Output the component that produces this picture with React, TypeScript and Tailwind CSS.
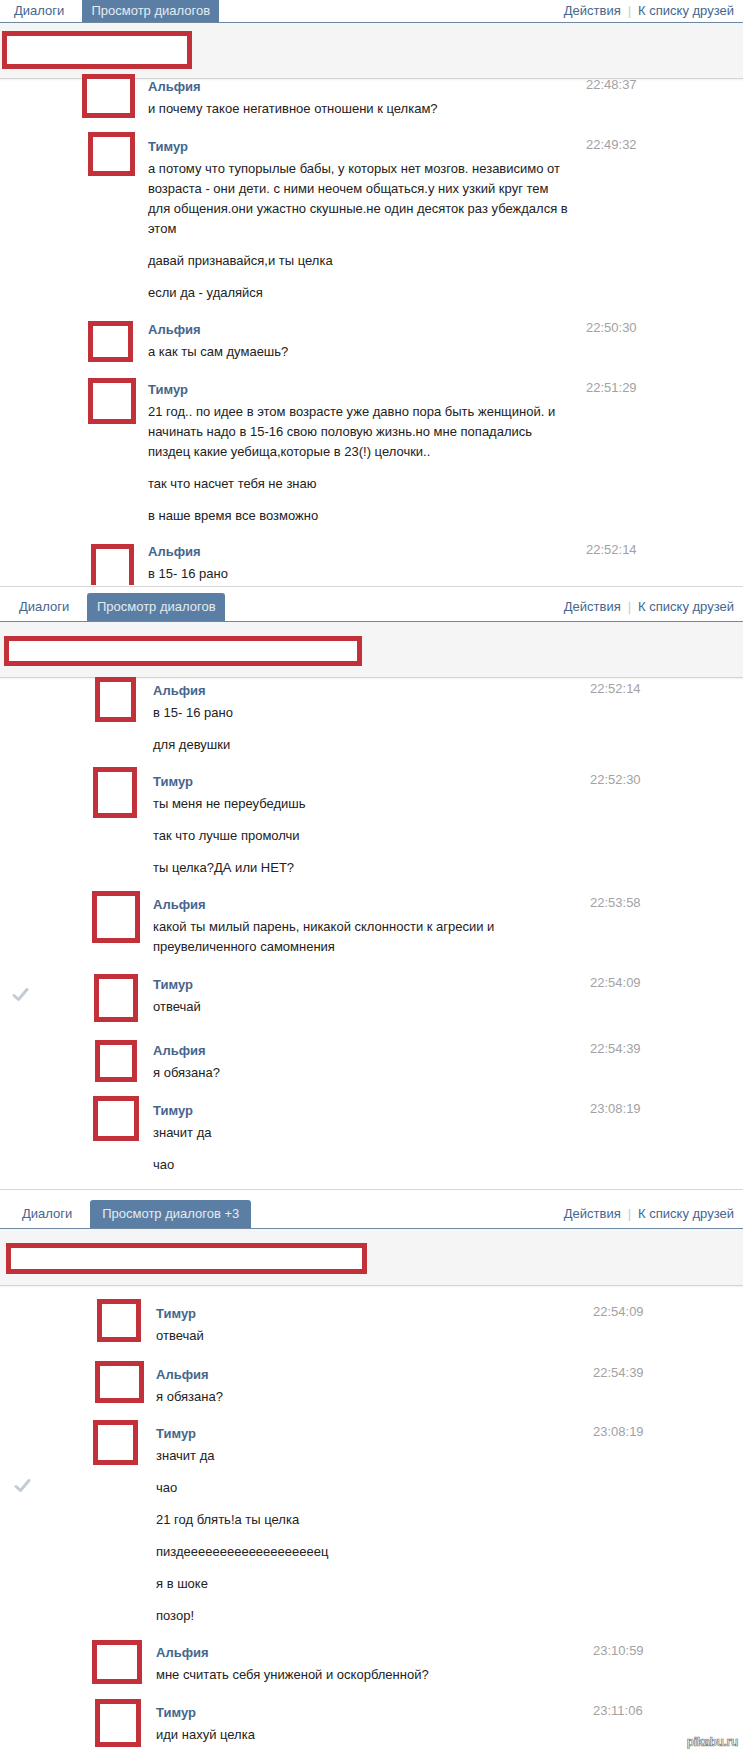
import React from "react";

type Msg = {
  name: string;
  time: string;
  paras: string[][];
  wrap: string;
  av: string;
  check?: string;
};

const P19 = "пизд" + "е".repeat(19) + "ц";

const sec1: Msg[] = [
  {
    name: "Альфия",
    time: "22:48:37",
    paras: [["и почему такое негативное отношени к целкам?"]],
    wrap: "-mt-[6px]",
    av: "ml-[82px] mt-[1px] w-[53px] h-[44px]",
  },
  {
    name: "Тимур",
    time: "22:49:32",
    paras: [
      [
        "а потому что тупорылые бабы, у которых нет мозгов. независимо от",
        "возраста - они дети. с ними неочем общаться.у них узкий круг тем",
        "для общения.они ужастно скушные.не один десяток раз убеждался в",
        "этом",
      ],
      ["давай признавайся,и ты целка"],
      ["если да - удаляйся"],
    ],
    wrap: "mt-[14px]",
    av: "ml-[88px] -mt-[1px] w-[47px] h-[44px]",
  },
  {
    name: "Альфия",
    time: "22:50:30",
    paras: [["а как ты сам думаешь?"]],
    wrap: "mt-[13px]",
    av: "ml-[88px] mt-[5px] w-[45px] h-[41px]",
  },
  {
    name: "Тимур",
    time: "22:51:29",
    paras: [
      [
        "21 год.. по идее в этом возрасте уже давно пора быть женщиной. и",
        "начинать надо в 15-16 свою половую жизнь.но мне попадались",
        "пиздец какие уебища,которые в 23(!) целочки..",
      ],
      ["так что насчет тебя не знаю"],
      ["в наше время все возможно"],
    ],
    wrap: "mt-[14px]",
    av: "ml-[88px] mt-[2px] w-[48px] h-[46px]",
  },
  {
    name: "Альфия",
    time: "22:52:14",
    paras: [["в 15- 16 рано"]],
    wrap: "mt-[12px]",
    av: "ml-[91px] mt-[6px] w-[43px] h-[41px] border-b-0",
  },
];

const sec2: Msg[] = [
  {
    name: "Альфия",
    time: "22:52:14",
    paras: [["в 15- 16 рано"], ["для девушки"]],
    wrap: "-mt-[1px]",
    av: "ml-[95px] mt-0 w-[41px] h-[45px]",
  },
  {
    name: "Тимур",
    time: "22:52:30",
    paras: [["ты меня не переубедишь"], ["так что лучше промолчи"], ["ты целка?ДА или НЕТ?"]],
    wrap: "mt-[13px]",
    av: "ml-[93px] -mt-[1px] w-[44px] h-[51px]",
  },
  {
    name: "Альфия",
    time: "22:53:58",
    paras: [["какой ты милый парень, никакой склонности к агресии и", "преувеличенного самомнения"]],
    wrap: "mt-[13px]",
    av: "ml-[92px] mt-0 w-[48px] h-[52px]",
  },
  {
    name: "Тимур",
    time: "22:54:09",
    paras: [["отвечай"]],
    wrap: "mt-[14px]",
    av: "ml-[94px] mt-[3px] w-[44px] h-[48px]",
    check: "top-[16px] left-[12px]",
  },
  {
    name: "Альфия",
    time: "22:54:39",
    paras: [["я обязана?"]],
    wrap: "mt-[15px]",
    av: "ml-[95px] mt-[3px] w-[42px] h-[42px]",
  },
  {
    name: "Тимур",
    time: "23:08:19",
    paras: [["значит да"], ["чао"]],
    wrap: "mt-[14px]",
    av: "ml-[93px] -mt-[1px] w-[46px] h-[45px]",
  },
];

const sec3: Msg[] = [
  {
    name: "Тимур",
    time: "22:54:09",
    paras: [["отвечай"]],
    wrap: "mt-[14px]",
    av: "ml-[97px] -mt-[1px] w-[44px] h-[43px]",
  },
  {
    name: "Альфия",
    time: "22:54:39",
    paras: [["я обязана?"]],
    wrap: "mt-[15px]",
    av: "ml-[95px] mt-0 w-[49px] h-[42px]",
  },
  {
    name: "Тимур",
    time: "23:08:19",
    paras: [["значит да"], ["чао"], ["21 год блять!а ты целка"], [P19], ["я в шоке"], ["позор!"]],
    wrap: "mt-[13px]",
    av: "ml-[93px] mt-0 w-[45px] h-[45px]",
    check: "top-[58px] left-[14px]",
  },
  {
    name: "Альфия",
    time: "23:10:59",
    paras: [["мне считать себя униженой и оскорбленной?"]],
    wrap: "mt-[13px]",
    av: "ml-[92px] mt-[1px] w-[50px] h-[44px]",
  },
  {
    name: "Тимур",
    time: "23:11:06",
    paras: [["иди нахуй целка"]],
    wrap: "mt-[14px]",
    av: "ml-[95px] mt-0 w-[46px] h-[48px]",
  },
];

function Check() {
  return (
    <svg width="17" height="15" viewBox="0 0 17 15" fill="none">
      <path d="M2 8.5 L6.5 12.5 L15 2.5" stroke="#c3ccd6" strokeWidth="3" strokeLinecap="round" strokeLinejoin="round" />
    </svg>
  );
}

function Message({ m, col, content }: { m: Msg; col: string; content: string }) {
  return (
    <div className={`flex items-start ${m.wrap}`}>
      <div className={`relative flex shrink-0 items-start ${col}`}>
        {m.check && (
          <div className={`absolute ${m.check}`}>
            <Check />
          </div>
        )}
        <div className={`shrink-0 border-[5px] border-[#c2303a] bg-white ${m.av}`} />
      </div>
      <div className={`shrink-0 ${content}`}>
        <div className="mt-[4px] h-[20px] whitespace-nowrap text-[13px] font-bold leading-[20px] text-[#45668e]">
          {m.name}
        </div>
        <div className="mt-[2px] text-[13px] leading-[20px] text-[#222]">
          {m.paras.map((p, i) => (
            <div key={i} className={i > 0 ? "mt-[12px]" : ""}>
              {p.map((l, j) => (
                <div key={j} className="whitespace-nowrap">
                  {l}
                </div>
              ))}
            </div>
          ))}
        </div>
      </div>
      <div className="mt-[2px] whitespace-nowrap text-[13px] leading-[20px] text-[#a2a2a2]">{m.time}</div>
    </div>
  );
}

function RightLinks() {
  return (
    <div className="ml-auto flex items-center pr-[9px] text-[13px] text-[#45668e]">
      <span>Действия</span>
      <span className="mx-[7px] text-[#c8c8c8]">|</span>
      <span>К списку друзей</span>
    </div>
  );
}

export default function App() {
  const font = "font-['Liberation_Sans',Arial,sans-serif]";
  return (
    <div className={`w-[743px] bg-white ${font}`}>
      {/* Section 1 */}
      <div className="border-b border-[#d6d6d6]">
        <div className="flex h-[23px] items-stretch border-b border-[#7089a3] pl-[14px]">
          <div className="flex items-center text-[13px] text-[#45668e]">Диалоги</div>
          <div className="ml-[18px] flex w-[137px] items-center justify-center bg-[#5b7ea4] text-[13px] text-[#e4ebf2]">
            Просмотр диалогов
          </div>
          <RightLinks />
        </div>
        <div className="h-[56px] border-b border-[#d3d3d3] bg-[#f5f5f5] pt-[8px] shadow-[0_1px_2px_rgba(0,0,0,0.06)]">
          <div className="ml-[2px] h-[38px] w-[190px] border-[5px] border-[#c2303a] bg-white" />
        </div>
        <div className="flex h-[507px] flex-col">
          {sec1.map((m, i) => (
            <Message key={i} m={m} col="w-[148px]" content="w-[438px]" />
          ))}
        </div>
      </div>

      {/* Section 2 */}
      <div className="border-b border-[#d6d6d6] pt-[6px]">
        <div className="flex h-[29px] items-stretch border-b border-[#7089a3] pl-[19px]">
          <div className="flex items-center text-[13px] text-[#45668e]">Диалоги</div>
          <div className="ml-[18px] flex w-[138px] items-center justify-center rounded-t-[3px] bg-[#5b7ea4] text-[13px] text-[#e4ebf2]">
            Просмотр диалогов
          </div>
          <RightLinks />
        </div>
        <div className="h-[56px] border-b border-[#d3d3d3] bg-[#f5f5f5] pt-[14px] shadow-[0_1px_2px_rgba(0,0,0,0.06)]">
          <div className="ml-[4px] h-[30px] w-[358px] border-[5px] border-[#c2303a] bg-white" />
        </div>
        <div className="flex flex-col pb-[14px]">
          {sec2.map((m, i) => (
            <Message key={i} m={m} col="w-[153px]" content="w-[437px]" />
          ))}
        </div>
      </div>

      {/* Section 3 */}
      <div className="relative pt-[10px]">
        <div className="flex h-[29px] items-stretch border-b border-[#7089a3] pl-[22px]">
          <div className="flex items-center text-[13px] text-[#45668e]">Диалоги</div>
          <div className="ml-[18px] flex w-[161px] items-center justify-center rounded-t-[3px] bg-[#5b7ea4] text-[13px] text-[#e4ebf2]">
            Просмотр диалогов +3
          </div>
          <RightLinks />
        </div>
        <div className="h-[57px] border-b border-[#d3d3d3] bg-[#f5f5f5] pt-[14px] shadow-[0_1px_2px_rgba(0,0,0,0.06)]">
          <div className="ml-[6px] h-[31px] w-[361px] border-[5px] border-[#c2303a] bg-white" />
        </div>
        <div className="flex flex-col pb-[8px]">
          {sec3.map((m, i) => (
            <Message key={i} m={m} col="w-[156px]" content="w-[437px]" />
          ))}
        </div>
        <div className="absolute bottom-[4px] right-[5px] text-[12px] font-bold tracking-[-0.3px] text-white [-webkit-text-stroke:0.7px_#7a7a7a]">
          pikabu.ru
        </div>
      </div>
    </div>
  );
}
